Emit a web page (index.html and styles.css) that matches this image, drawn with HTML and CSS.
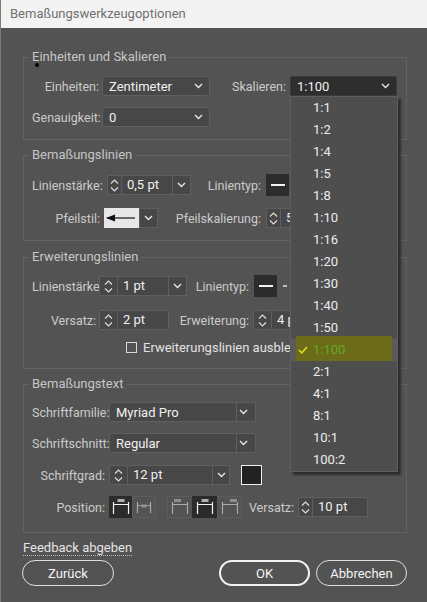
FILE: index.html
```html
<!DOCTYPE html>
<html lang="de">
<head>
<meta charset="utf-8">
<title>Bemaßungswerkzeugoptionen</title>
<link rel="stylesheet" href="styles.css">
</head>
<body>
<div class="dialog">
  <div class="titlebar">Bemaßungswerkzeugoptionen</div>
  <div class="content">
    <fieldset class="sec s1">
      <legend>Einheiten und Skalieren</legend>
      <div class="rows g11">
        <div class="row">
          <span class="lbl w67">Einheiten:</span>
          <div class="select w108 ml3"><span class="txt">Zentimeter</span><svg class="chev" width="9" height="6" viewBox="0 0 9 6"><path d="M1 1l3.5 3.5L8 1"/></svg></div>
          <span class="lbl w76">Skalieren:</span>
          <div class="select dark w107 ml4"><span class="txt">1:100</span><svg class="chev" width="9" height="6" viewBox="0 0 9 6"><path d="M1 1l3.5 3.5L8 1"/></svg></div>
        </div>
        <div class="row">
          <span class="lbl w67">Genauigkeit:</span>
          <div class="select w108 ml3"><span class="txt">0</span><svg class="chev" width="9" height="6" viewBox="0 0 9 6"><path d="M1 1l3.5 3.5L8 1"/></svg></div>
        </div>
      </div>
    </fieldset>

    <fieldset class="sec s2">
      <legend>Bemaßungslinien</legend>
      <div class="rows g13">
        <div class="row">
          <span class="lbl w67">Linienstärke:</span>
          <div class="spin ml8">
            <div class="arr w14"><svg width="9" height="15" viewBox="0 0 9 15"><path d="M1 5.5l3.5-3.5L8 5.5M1 9.5l3.5 3.5L8 9.5"/></svg></div>
            <div class="val w51">0,5 pt</div>
            <div class="chv"><svg class="chev" width="9" height="6" viewBox="0 0 9 6"><path d="M1 1l3.5 3.5L8 1"/></svg></div>
          </div>
          <span class="lbl w70">Linientyp:</span>
          <div class="ltype ml5"><span class="bar"></span></div>
        </div>
        <div class="row">
          <span class="lbl w68">Pfeilstil:</span>
          <div class="arrowbox ml4"><svg width="35" height="18" viewBox="0 0 35 18"><path class="ar" d="M3 9H31"/><path class="arh" d="M2 9l9-3.5v7z"/></svg></div>
          <div class="chv solo"><svg class="chev" width="9" height="6" viewBox="0 0 9 6"><path d="M1 1l3.5 3.5L8 1"/></svg></div>
          <span class="lbl w103">Pfeilskalierung:</span>
          <div class="spin ml5">
            <div class="arr w14"><svg width="9" height="15" viewBox="0 0 9 15"><path d="M1 5.5l3.5-3.5L8 5.5M1 9.5l3.5 3.5L8 9.5"/></svg></div>
            <div class="val w51">5</div>
          </div>
        </div>
      </div>
    </fieldset>

    <fieldset class="sec s3">
      <legend>Erweiterungslinien</legend>
      <div class="rows g14">
        <div class="row">
          <span class="lbl w64">Linienstärke</span>
          <div class="spin ml3">
            <div class="arr w18"><svg width="9" height="15" viewBox="0 0 9 15"><path d="M1 5.5l3.5-3.5L8 5.5M1 9.5l3.5 3.5L8 9.5"/></svg></div>
            <div class="val w51">1 pt</div>
            <div class="chv"><svg class="chev" width="9" height="6" viewBox="0 0 9 6"><path d="M1 1l3.5 3.5L8 1"/></svg></div>
          </div>
          <span class="lbl w62">Linientyp:</span>
          <div class="ltype ml5"><span class="bar"></span></div>
          <div class="ltype light"><span class="dash"></span><span class="dash"></span></div>
        </div>
        <div class="row">
          <span class="lbl w64">Versatz:</span>
          <div class="spin ml3">
            <div class="arr w18"><svg width="9" height="15" viewBox="0 0 9 15"><path d="M1 5.5l3.5-3.5L8 5.5M1 9.5l3.5 3.5L8 9.5"/></svg></div>
            <div class="val w51">2 pt</div>
          </div>
          <span class="lbl w80">Erweiterung:</span>
          <div class="spin ml4">
            <div class="arr w18"><svg width="9" height="15" viewBox="0 0 9 15"><path d="M1 5.5l3.5-3.5L8 5.5M1 9.5l3.5 3.5L8 9.5"/></svg></div>
            <div class="val w51">4 pt</div>
          </div>
        </div>
        <div class="row check mt-4">
          <span class="box"></span>
          <span class="ctext">Erweiterungslinien ausblenden</span>
        </div>
      </div>
    </fieldset>

    <fieldset class="sec s4">
      <legend>Bemaßungstext</legend>
      <div class="rows g11">
        <div class="row">
          <span class="lbl w73">Schriftfamilie:</span>
          <div class="select split w147 ml4"><span class="txt">Myriad Pro</span><span class="part"><svg class="chev" width="9" height="6" viewBox="0 0 9 6"><path d="M1 1l3.5 3.5L8 1"/></svg></span></div>
        </div>
        <div class="row">
          <span class="lbl w73">Schriftschnitt:</span>
          <div class="select split w147 ml4"><span class="txt">Regular</span><span class="part"><svg class="chev" width="9" height="6" viewBox="0 0 9 6"><path d="M1 1l3.5 3.5L8 1"/></svg></span></div>
        </div>
        <div class="row mt1">
          <span class="lbl w73">Schriftgrad:</span>
          <div class="spin ml4">
            <div class="arr w18"><svg width="9" height="15" viewBox="0 0 9 15"><path d="M1 5.5l3.5-3.5L8 5.5M1 9.5l3.5 3.5L8 9.5"/></svg></div>
            <div class="val w85">12 pt</div>
            <div class="chv w17"><svg class="chev" width="9" height="6" viewBox="0 0 9 6"><path d="M1 1l3.5 3.5L8 1"/></svg></div>
          </div>
          <span class="swatch"></span>
        </div>
        <div class="row tall">
          <span class="lbl w73">Position:</span>
          <div class="pgroup ml4">
            <span class="pbtn on"><svg width="24" height="22" viewBox="0 0 24 22"><rect class="pr" x="8.5" y="3" width="7" height="3"/><path class="pl" d="M4 8.5H20M4.5 6V18M19.5 6V18"/></svg></span>
            <span class="pbtn"><svg width="24" height="22" viewBox="0 0 24 22"><rect class="pr" x="9" y="8.5" width="6" height="3"/><path class="pl" d="M5 9.5H8.5M15.5 9.5H19M5.5 6V17M18.5 6V17"/></svg></span>
          </div>
          <div class="pgroup ml11">
            <span class="pbtn w25"><svg width="24" height="22" viewBox="0 0 24 22"><rect class="pr" x="6" y="3" width="7" height="3"/><path class="pl" d="M4 8.5H20M4.5 6V18M19.5 6V18"/></svg></span>
            <span class="pbtn w25 on"><svg width="24" height="22" viewBox="0 0 24 22"><rect class="pr" x="8.5" y="3" width="7" height="3"/><path class="pl" d="M4 8.5H20M4.5 6V18M19.5 6V18"/></svg></span>
            <span class="pbtn w24"><svg width="24" height="22" viewBox="0 0 24 22"><rect class="pr" x="12" y="3" width="7" height="3"/><path class="pl" d="M4 8.5H20M4.5 6V18M19.5 6V18"/></svg></span>
          </div>
          <span class="lbl w52">Versatz:</span>
          <div class="spin ml4">
            <div class="arr w14"><svg width="9" height="15" viewBox="0 0 9 15"><path d="M1 5.5l3.5-3.5L8 5.5M1 9.5l3.5 3.5L8 9.5"/></svg></div>
            <div class="val w55">10 pt</div>
          </div>
        </div>
      </div>
    </fieldset>

    <div class="feedback"><span class="flink">Feedback abgeben</span></div>
    <div class="buttons">
      <span class="btn back">Zurück</span>
      <span class="btn ok">OK</span>
      <span class="btn cancel">Abbrechen</span>
    </div>
  </div>

  <span class="cursor-dot"></span>

  <ul class="dropdown">
    <li>1:1</li>
    <li>1:2</li>
    <li>1:4</li>
    <li>1:5</li>
    <li>1:8</li>
    <li>1:10</li>
    <li>1:16</li>
    <li>1:20</li>
    <li>1:30</li>
    <li>1:40</li>
    <li>1:50</li>
    <li class="sel"><span class="hl"></span><svg class="tick" width="10" height="8" viewBox="0 0 10 8"><path d="M1 4.2l2.8 2.6L9 1"/></svg><span class="seltxt">1:100</span></li>
    <li>2:1</li>
    <li>4:1</li>
    <li>8:1</li>
    <li>10:1</li>
    <li>100:2</li>
  </ul>
</div>
</body>
</html>
```

FILE: styles.css
```css
html, body {
  margin: 0;
  padding: 0;
  background: #535353;
}

body {
  font-family: Roboto, "Liberation Sans", Arial, sans-serif;
  font-size: 12.5px;
  color: #cdcdcd;
}

.dialog {
  position: relative;
  width: 427px;
  height: 602px;
  box-sizing: border-box;
  border-left: 1px solid #7a7a7a;
  background: #535353;
  overflow: hidden;
}

.titlebar {
  height: 28px;
  line-height: 28px;
  background: #f3f3f3;
  color: #707070;
  font-size: 13px;
  padding-left: 9px;
}

.content {
  padding: 21px 20px 0 22px;
}

/* sections */
.sec {
  margin: 0;
  border: 1px solid #626262;
  padding: 11px 8px 12px 8px;
  min-width: 0;
}

.sec legend {
  padding: 0 3px;
  margin-left: -3px;
  font-size: 13px;
  line-height: 16px;
  color: #c6c6c6;
}

.s2 { margin-top: 7px; padding-top: 12px; padding-bottom: 12px; }
.s3 { margin-top: 8px; padding-top: 11px; padding-bottom: 14px; }
.s4 { margin-top: 7px; padding-top: 10px; padding-bottom: 14px; }

.rows {
  display: flex;
  flex-direction: column;
}
.g11 { gap: 11px; }
.g13 { gap: 13px; }
.g14 { gap: 14px; }

.row {
  display: flex;
  align-items: center;
  height: 20px;
  white-space: nowrap;
}
.row.tall { height: 22px; }
.row.check { height: 14px; }
.mt-4 { margin-top: -4px; }
.mt1 { margin-top: 1px; }

.lbl {
  display: block;
  text-align: right;
  color: #cbcbcb;
  flex: none;
}
.w52 { width: 52px; }
.w62 { width: 62px; }
.w64 { width: 64px; }
.w67 { width: 67px; }
.w68 { width: 68px; }
.w70 { width: 70px; }
.w73 { width: 73px; }
.w76 { width: 76px; }
.w80 { width: 80px; }
.w103 { width: 103px; }

.ml3 { margin-left: 3px; }
.ml4 { margin-left: 4px; }
.ml5 { margin-left: 5px; }
.ml8 { margin-left: 8px; }
.ml11 { margin-left: 11px; }

/* select */
.select {
  height: 20px;
  box-sizing: border-box;
  border: 1px solid #5f5f5f;
  background: #474747;
  border-radius: 2px;
  display: flex;
  align-items: center;
  padding-left: 6px;
  color: #f0f0f0;
  flex: none;
}
.select .txt { flex: 1; font-size: 13px; }
.select .chev { margin-right: 6px; }
.select.dark {
  background: #2e2e2e;
  border-color: #3a3a3a;
}
.select.w108 { width: 108px; }
.select.w107 { width: 107px; }
.select.w147 { width: 147px; }
.select.split .part {
  width: 18px;
  align-self: stretch;
  border-left: 1px solid #5f5f5f;
  display: flex;
  align-items: center;
  justify-content: center;
}

.chev path {
  fill: none;
  stroke: #e6e6e6;
  stroke-width: 1.4;
}

/* spinner */
.spin {
  display: flex;
  height: 20px;
  flex: none;
}
.spin > div {
  box-sizing: border-box;
  height: 20px;
  border: 1px solid #5f5f5f;
  background: #474747;
}
.spin > div + div { margin-left: -1px; }
.arr {
  display: flex;
  align-items: center;
  justify-content: center;
}
.arr path {
  fill: none;
  stroke: #dcdcdc;
  stroke-width: 1.2;
}
.arr.w14 { width: 15px; }
.arr.w18 { width: 19px; }
.val {
  color: #f0f0f0;
  font-size: 13px;
  line-height: 18px;
  padding-left: 5px;
  overflow: hidden;
}
.val.w51 { width: 52px; }
.val.w55 { width: 56px; }
.val.w85 { width: 86px; }
.chv {
  width: 19px;
  display: flex;
  align-items: center;
  justify-content: center;
}
.chv.w17 { width: 18px; }
.chv.solo {
  box-sizing: border-box;
  height: 20px;
  border: 1px solid #5f5f5f;
  background: #474747;
  flex: none;
}

/* line type */
.ltype {
  width: 23px;
  height: 22px;
  background: #2c2c2c;
  display: flex;
  align-items: center;
  justify-content: center;
  flex: none;
}
.ltype .bar {
  width: 14px;
  height: 2px;
  background: #f2f2f2;
}
.ltype.light {
  background: #535353;
  gap: 3px;
}
.ltype .dash {
  width: 4px;
  height: 2px;
  background: #bdbdbd;
}

/* arrow style */
.arrowbox {
  width: 35px;
  height: 20px;
  box-sizing: border-box;
  background: #e8e8e8;
  display: flex;
  align-items: center;
  flex: none;
}
.arrowbox .ar { stroke: #111; stroke-width: 1.2; fill: none; }
.arrowbox .arh { fill: #111; }

/* checkbox */
.check .box {
  width: 11px;
  height: 11px;
  box-sizing: border-box;
  border: 1px solid #d8d8d8;
  margin-left: 94px;
  flex: none;
}
.check .ctext {
  margin-left: 6px;
  width: 147px;
  overflow: hidden;
  flex: none;
  color: #e2e2e2;
  font-size: 13px;
}

/* swatch */
.swatch {
  width: 21px;
  height: 20px;
  box-sizing: border-box;
  background: #222;
  border: 1px solid #f0f0f0;
  margin-left: 11px;
  flex: none;
}

/* position buttons */
.pgroup {
  display: flex;
  height: 22px;
  flex: none;
}
.pbtn {
  width: 24px;
  height: 22px;
  box-sizing: border-box;
  border: 1px solid #5d5d5d;
  display: flex;
  align-items: center;
  justify-content: center;
}
.pbtn + .pbtn { margin-left: -1px; }
.pbtn.w25 { width: 26px; }
.pbtn.w24 { width: 25px; }
.pbtn svg { flex: none; }
.pbtn .pl { stroke: #a9a9a9; stroke-width: 1.2; fill: none; }
.pbtn .pr { fill: #8e8e8e; }
.pbtn.on { background: #2b2b2b; border-color: #2b2b2b; }
.pbtn.on .pl { stroke: #f5f5f5; }
.pbtn.on .pr { fill: #b0b0b0; }

/* feedback + buttons */
.feedback {
  margin-top: 7px;
  height: 16px;
  line-height: 16px;
}
.flink {
  color: #e4e4e4;
  font-size: 13px;
  border-bottom: 1px dotted #bdbdbd;
}

.buttons {
  display: flex;
  margin-top: 4px;
  margin-left: -1px;
  gap: 6px;
}
.btn {
  box-sizing: border-box;
  height: 26px;
  width: 92px;
  border: 1.5px solid #dedede;
  border-radius: 13px;
  display: flex;
  align-items: center;
  justify-content: center;
  color: #f4f4f4;
  font-size: 13px;
}
.btn.ok {
  margin-left: auto;
  width: 91px;
  border: 2px solid #f4f4f4;
}
.btn.cancel { width: 91px; }

/* stray cursor dot */
.cursor-dot {
  position: absolute;
  left: 34px;
  top: 63px;
  width: 4px;
  height: 4px;
  border-radius: 50%;
  background: #000;
}

/* dropdown menu */
.dropdown {
  position: absolute;
  left: 289px;
  top: 96px;
  width: 108px;
  margin: 0;
  padding: 0;
  list-style: none;
  background: #4e4e4e;
  border: 1px solid #5d5d5d;
  box-sizing: border-box;
  box-shadow: 3px 3px 2px rgba(0, 0, 0, 0.45);
}
.dropdown li {
  position: relative;
  height: 22px;
  line-height: 22px;
  padding-left: 22px;
  color: #ececec;
  font-size: 13px;
}
.dropdown li.sel {
  background: #5b5b5b;
}
.dropdown .hl {
  position: absolute;
  left: 5px;
  top: -3px;
  width: 96px;
  height: 25px;
  background: #6c6b1a;
}
.dropdown .tick {
  position: absolute;
  left: 7px;
  top: 7px;
}
.dropdown .tick path {
  fill: none;
  stroke: #d6d61e;
  stroke-width: 1.8;
}
.dropdown .seltxt {
  position: relative;
  color: #62a826;
}
```
